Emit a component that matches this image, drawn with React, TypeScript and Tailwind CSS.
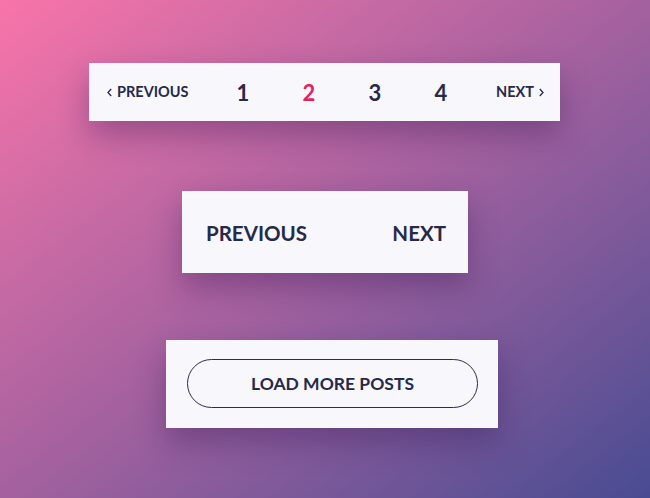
const pages = ["1", "2", "3", "4"];
const current = "2";

export default function App() {
    return (
        <main className="h-screen w-full overflow-hidden bg-linear-to-br from-[#f874a9] via-[#a4619f] to-[#484b92] font-['Lato','Noto_Sans',sans-serif] text-[#262949]">
            <div className="flex flex-col items-center pt-[63px]">
                {/* numbered pager */}
                <nav className="-ml-px flex h-[58px] w-[471px] items-center bg-[#f8f7fc] pl-[18px] shadow-[0_14px_30px_rgba(50,20,80,0.35)]">
                    <a className="flex w-[83px] items-center gap-[5px] text-[14.5px] font-bold" href="#">
                        <ChevronLeft />
                        PREVIOUS
                    </a>
                    <div className="ml-[20px] flex">
                        {pages.map((p) => (
                            <a
                                key={p}
                                href="#"
                                className={`flex w-[66px] justify-center text-[22px] font-bold ${p === current ? "text-[#e3235f]" : ""}`}
                            >
                                {p}
                            </a>
                        ))}
                    </div>
                    <a className="ml-[22px] flex items-center gap-[5px] text-[14.5px] font-bold" href="#">
                        NEXT
                        <ChevronRight />
                    </a>
                </nav>

                {/* previous / next */}
                <nav className="mt-[70px] flex h-[82px] w-[286px] items-center justify-between bg-[#f8f7fc] pl-[24px] pr-[22px] pt-[3px] shadow-[0_14px_30px_rgba(50,20,80,0.35)]">
                    <a className="text-[20.5px] font-bold" href="#">PREVIOUS</a>
                    <a className="text-[20.5px] font-bold" href="#">NEXT</a>
                </nav>

                {/* load more */}
                <div className="ml-[14px] mt-[67px] flex h-[88px] w-[332px] items-start bg-[#f8f7fc] pl-[21px] pt-[19px] shadow-[0_14px_30px_rgba(50,20,80,0.35)]">
                    <button className="flex h-[49px] w-[291px] items-center justify-center rounded-full border border-[#2b2d4c] pt-px text-[17.5px] font-bold">
                        LOAD MORE POSTS
                    </button>
                </div>
            </div>
        </main>
    );
}

function ChevronLeft() {
    return (
        <svg width="5" height="9" viewBox="0 0 5 9" fill="none" stroke="currentColor" strokeWidth="1.3">
            <path d="M4.2 1 1 4.5 4.2 8" />
        </svg>
    );
}

function ChevronRight() {
    return (
        <svg width="5" height="9" viewBox="0 0 5 9" fill="none" stroke="currentColor" strokeWidth="1.3">
            <path d="M.8 1 4 4.5.8 8" />
        </svg>
    );
}
